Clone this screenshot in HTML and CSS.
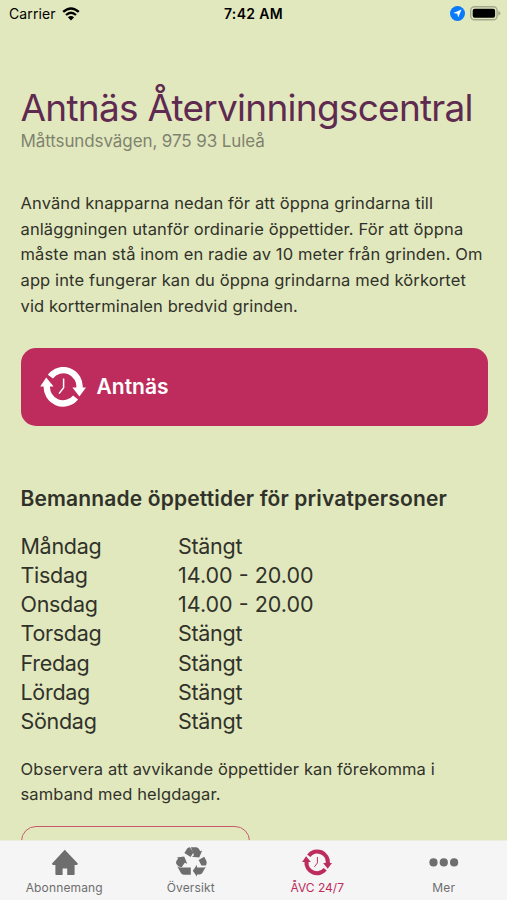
FILE: index.html
```html
<!DOCTYPE html>
<html lang="sv">
<head>
    <meta charset="UTF-8">
    <meta name="viewport" content="width=device-width, initial-scale=1.0">
    <title>ÅVC 24/7</title>
    <link rel="stylesheet" href="styles.css">
</head>
<body>
    <svg class="symbols" aria-hidden="true">
        <symbol id="icon-avc" viewBox="0 0 46 40">
            <path d="M10.4 9.6A16.2 16.2 0 0 1 39.4 21.5" fill="none" stroke="currentColor" stroke-width="6.4"/>
            <path d="M35.6 30.4A16.2 16.2 0 0 1 6.9 18.5" fill="none" stroke="currentColor" stroke-width="6.4"/>
            <path d="M32.4 20.6L46 20.6L39.4 29.6Z" fill="currentColor"/>
            <path d="M.2 19.4L6.2 10.4L13.6 19.4Z" fill="currentColor"/>
            <path d="M23.6 11.5V20.8L19 26.6" fill="none" stroke="currentColor" stroke-width="1.5"/>
        </symbol>
    </svg>

    <div class="app">
        <header class="status-bar">
            <div class="carrier">
                <span>Carrier</span>
                <svg class="wifi" viewBox="0 0 18 14">
                    <path d="M1.2 4.9Q9-2 16.8 4.9" fill="none" stroke="#000" stroke-width="2.4"/>
                    <path d="M4 8Q9 3.6 14 8" fill="none" stroke="#000" stroke-width="2.3"/>
                    <path d="M5.9 10.3Q9 7.6 12.1 10.3L9 13.5Z"/>
                </svg>
            </div>
            <div class="clock">7:42 AM</div>
            <div class="indicators">
                <svg class="location" viewBox="0 0 15 15">
                    <circle cx="7.5" cy="7.5" r="7.5" fill="#087bfb"/>
                    <path d="M11.5 3.5L8.2 11.6L7.3 7.8L3.4 6.9Z" fill="#fff"/>
                </svg>
                <svg class="battery" viewBox="0 0 31 15">
                    <rect x=".7" y=".7" width="26.4" height="13.1" rx="3.8" fill="none" stroke="#a5a98c" stroke-width="1.4"/>
                    <rect x="2.7" y="2.7" width="22.4" height="9.1" rx="2"/>
                    <path d="M28.3 4.8Q30.4 5.5 30.4 7.3Q30.4 9.1 28.3 9.8Z" fill="#a5a98c"/>
                </svg>
            </div>
        </header>

        <main class="content">
            <h1>Antnäs Återvinningscentral</h1>
            <p class="address">Måttsundsvägen, 975 93 Luleå</p>

            <p class="intro">Använd knapparna nedan för att öppna grindarna till<br>
                anläggningen utanför ordinarie öppettider. För att öppna<br>
                måste man stå inom en radie av 10 meter från grinden. Om<br>
                app inte fungerar kan du öppna grindarna med körkortet<br>
                vid kortterminalen bredvid grinden.</p>

            <button class="gate-button" type="button">
                <svg class="gate-icon"><use href="#icon-avc"/></svg>
                <span>Antnäs</span>
            </button>

            <h2>Bemannade öppettider för privatpersoner</h2>
            <dl class="hours">
                <dt>Måndag</dt><dd>Stängt</dd>
                <dt>Tisdag</dt><dd class="time">14.00 - 20.00</dd>
                <dt>Onsdag</dt><dd class="time">14.00 - 20.00</dd>
                <dt>Torsdag</dt><dd>Stängt</dd>
                <dt>Fredag</dt><dd>Stängt</dd>
                <dt>Lördag</dt><dd>Stängt</dd>
                <dt>Söndag</dt><dd>Stängt</dd>
            </dl>
            <p class="note">Observera att avvikande öppettider kan förekomma i<br>
                samband med helgdagar.</p>

            <div class="outline-button"></div>
        </main>

        <nav class="tab-bar">
            <a class="tab">
                <svg class="tab-icon" viewBox="0 0 46 30">
                    <path d="M23.8 2.8L36.8 16.6L36.2 18H33.6V27.2Q33.6 28 32.8 28H26.2V21.6H21.6V28H15.2Q14.4 28 14.4 27.2V18H11.6L11 16.6Z" fill="currentColor"/>
                </svg>
                <span>Abonnemang</span>
            </a>
            <a class="tab">
                <svg class="tab-icon" viewBox="0 0 46 30">
                    <g fill="currentColor">
                        <path d="M16.4 6L19 1.8Q20 .2 21.8 .3L25.4 5.4L22.6 10Z"/>
                        <path d="M22.8 .2H28.2Q29.8 .2 30.8 1.8L32.3 4.2L34.2 3.4L31.2 10.4L24 9.8L26 8.2Z"/>
                        <path d="M30.6 13L36.2 9.8L38.2 13.4Q39.2 15.4 38.4 17.2L37.8 18.6H33.4Z"/>
                        <path d="M37.8 19.8L34.6 25.6Q33.6 27.6 31.4 27.6H29V29.8L24.8 23.8L29 17.8V20.4H35.8Q37 20.4 37.8 19.8Z"/>
                        <path d="M12.8 20.6H22.8V27.8H15.8Q13.9 27.8 12.9 26L9.2 19.2Q10.6 20.6 12.8 20.6Z"/>
                        <path d="M8.6 10.4L16.2 9.6L19.2 16.8L16.8 15.8L13.8 20H12Q9.6 19.2 8.4 17Q7.6 15.4 8.4 14L10.2 11.3Z"/>
                    </g>
                </svg>
                <span>Översikt</span>
            </a>
            <a class="tab active">
                <svg class="tab-icon tab-icon-avc"><use href="#icon-avc"/></svg>
                <span>ÅVC 24/7</span>
            </a>
            <a class="tab">
                <svg class="tab-icon" viewBox="0 0 46 30">
                    <g fill="currentColor">
                        <circle cx="12.5" cy="15.4" r="4.1"/>
                        <circle cx="22.8" cy="15.4" r="4.1"/>
                        <circle cx="33.1" cy="15.4" r="4.1"/>
                    </g>
                </svg>
                <span>Mer</span>
            </a>
        </nav>
    </div>
</body>
</html>
```
FILE: styles.css
```css
* {
    margin: 0;
    padding: 0;
    box-sizing: border-box;
}

body {
    font-family: Inter, "Liberation Sans", sans-serif;
    color: #30322a;
    background: #e2e8be;
    overflow: hidden;
}

.symbols {
    display: none;
}

.app {
    display: flex;
    flex-direction: column;
    height: 900px;
}

.status-bar {
    display: grid;
    grid-template-columns: 1fr auto 1fr;
    align-items: center;
    flex: none;
    height: 27px;
    padding: 0 6px 0 9px;
    color: #000;
    font-size: 14px;
}

.carrier {
    display: flex;
    align-items: center;
    gap: 6px;
    letter-spacing: 0.1px;
}

.wifi {
    width: 18px;
    height: 14px;
}

.clock {
    font-weight: 600;
    letter-spacing: 0.35px;
    margin-right: 3px;
}

.indicators {
    display: flex;
    align-items: center;
    justify-content: flex-end;
    gap: 5px;
}

.location {
    width: 15px;
    height: 15px;
}

.battery {
    width: 31px;
    height: 15px;
}

.content {
    flex: 1;
    min-height: 0;
    padding: 59px 19px 0 20.5px;
    overflow: hidden;
    white-space: nowrap;
}

h1 {
    color: #5e2a50;
    font-size: 37px;
    font-weight: 400;
    line-height: 44px;
    letter-spacing: -0.74px;
}

.address {
    color: #7f836e;
    font-size: 17px;
    line-height: 22px;
    letter-spacing: -0.1px;
}

.intro,
.note {
    font-size: 16.5px;
    line-height: 25.7px;
    letter-spacing: 0.12px;
}

.intro {
    margin-top: 39px;
}

.gate-button {
    display: flex;
    align-items: center;
    gap: 11px;
    width: 467px;
    height: 78px;
    margin-top: 28px;
    padding-left: 19px;
    border: none;
    border-radius: 15px;
    background: #bd2c5c;
    color: #fff;
    font-family: inherit;
    font-size: 21px;
    font-weight: 600;
}

.gate-icon {
    width: 46px;
    height: 40px;
}

h2 {
    margin-top: 59px;
    font-size: 21px;
    font-weight: 600;
    line-height: 28px;
    letter-spacing: 0.15px;
}

.hours {
    display: grid;
    grid-template-columns: 157.5px 1fr;
    margin-top: 19px;
    font-size: 21.5px;
    line-height: 29.3px;
    letter-spacing: -0.3px;
}

.time {
    letter-spacing: 0;
}

.note {
    margin-top: 20px;
}

.outline-button {
    width: 229px;
    height: 60px;
    margin-top: 18px;
    border: 1.5px solid #c85a70;
    border-radius: 15px;
}

.tab-bar {
    display: grid;
    grid-template-columns: repeat(4, 1fr);
    flex: none;
    height: 60px;
    padding-left: 1px;
    border-top: 1px solid #ececdf;
    background: #f5f5f5;
}

.tab {
    display: flex;
    flex-direction: column;
    align-items: center;
    padding-top: 6px;
    color: #6e6e6e;
    font-size: 12px;
    line-height: 16px;
    letter-spacing: 0.15px;
}

.tab-icon {
    width: 46px;
    height: 30px;
    margin-bottom: 3px;
}

.tab-icon-avc {
    width: 30px;
    height: 27px;
    margin: 2px 0 4px;
}

.active {
    color: #bd2c5c;
    letter-spacing: 0;
}
```
